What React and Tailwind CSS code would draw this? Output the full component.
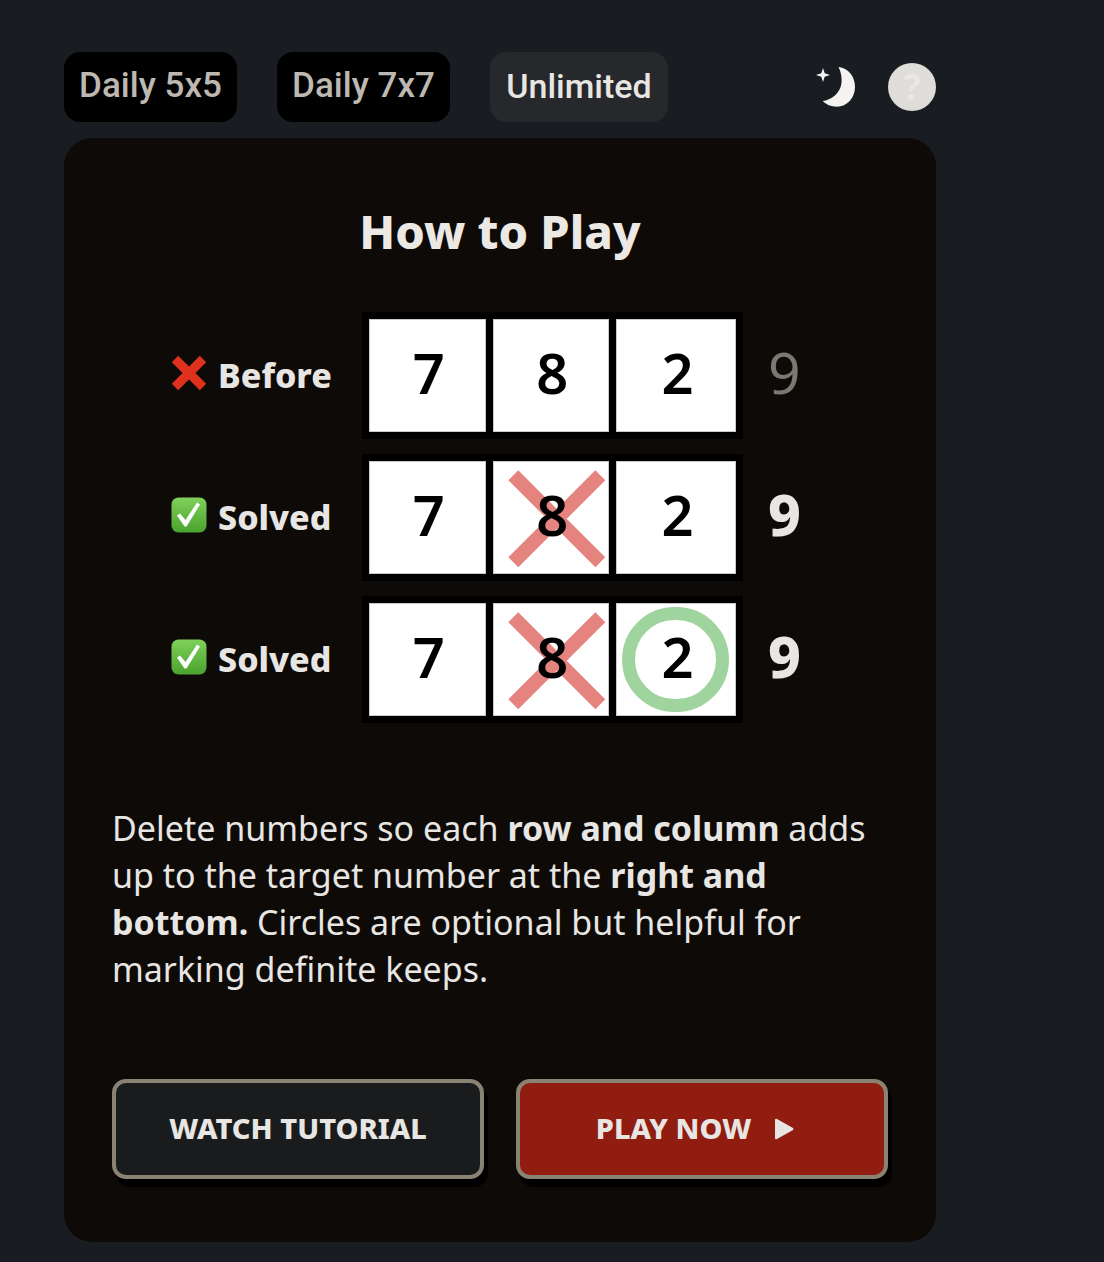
import React from 'react';

const CrossIcon = () => (
  <svg width="36" height="36" viewBox="0 0 36 36" className="shrink-0 -mt-[5px]">
    <path d="M4 4 L32 32 M32 4 L4 32" stroke="#e0301e" strokeWidth="9" />
  </svg>
);

const CheckIcon = () => (
  <svg width="36" height="36" viewBox="0 0 36 36" className="shrink-0 -mt-[5px]">
    <defs>
      <linearGradient id="chk" x1="0" y1="0" x2="0" y2="1">
        <stop offset="0" stopColor="#7fd15a" />
        <stop offset="1" stopColor="#4aa32f" />
      </linearGradient>
    </defs>
    <rect x="0.5" y="0.5" width="35" height="35" rx="7" fill="url(#chk)" />
    <path d="M6 18.5 L9 16.5 L14.5 23 L26 5.5 L29 7.5 L15.5 29.5 L13.5 29.5 Z" fill="#ffffff" />
  </svg>
);

const Cell = ({ value, crossed, circled, wide }) => (
  <div className={`relative flex items-center justify-center h-[113px] bg-white border border-[#c9c9c9] ${wide ? 'w-[120px]' : 'w-[116.5px]'}`}>
    {crossed && (
      <svg className="absolute inset-0 w-full h-full" viewBox="0 0 114.5 111">
        <path d="M19.3 13.3 L106.3 100.3 M106.3 13.3 L19.3 100.3" stroke="#e5837e" strokeWidth="14" />
      </svg>
    )}
    {circled && (
      <div className="absolute left-[5px] top-[3px] w-[107px] h-[105px] rounded-full border-[13px] border-[#9fd49e]" />
    )}
    <span className="relative text-[56px] leading-none font-semibold text-black font-['Noto_Sans',sans-serif] -mt-[8px] ml-[3px]">{value}</span>
  </div>
);

const Row = ({ icon, label, target, dim, crossed, circled }) => (
  <div className="flex items-center">
    <div className="flex items-center w-[191px] gap-[11px]">
      {icon}
      <span className="text-[34px] font-extrabold text-[#e8e6e3]">{label}</span>
    </div>
    <div className="flex gap-[7px] bg-black p-[7px]">
      <Cell value="7" />
      <Cell value="8" crossed={crossed} />
      <Cell value="2" circled={circled} wide />
    </div>
    <span className={`ml-[25px] text-[57px] leading-none -mt-[7px] font-['Noto_Sans',sans-serif] ${dim ? 'font-normal text-[#7d7772]' : 'font-extrabold text-[#e8e6e3]'}`}>
      {target}
    </span>
  </div>
);

const Tab = ({ children, active }) => (
  <button className={`h-[70px] pb-[2px] rounded-[16px] font-medium font-['Roboto',sans-serif] ${active ? 'w-[178px] text-[34px] bg-[#26282b] text-[#e8e6e3]' : 'w-[173px] text-[35px] bg-black text-[#bdb8b1]'}`}>
    {children}
  </button>
);

export default function App() {
  return (
    <div className="min-h-[1262px] bg-[#191d22] pt-[52px] pl-[64px] font-['Noto_Sans',sans-serif]">
      <div className="w-[872px]">
        {/* Top bar */}
        <div className="flex items-center h-[70px] mb-[16px]">
          <div className="flex gap-[40px]">
            <Tab>Daily 5x5</Tab>
            <Tab>Daily 7x7</Tab>
            <Tab active>Unlimited</Tab>
          </div>
          <svg width="44" height="44" viewBox="0 0 44 44" className="ml-auto mr-[28px]">
            <path d="M22.5 2 C33 3 39 12 39 22 C39 33 31 41.7 21 41.7 C15 41.7 10 39.5 6.7 36 C15 35 24 29 25.5 18 C26 12 25 7 22.5 2 Z" fill="#f5f3f2" />
            <path d="M7 3 L8.7 8.3 L14 10 L8.7 11.7 L7 17 L5.3 11.7 L0 10 L5.3 8.3 Z" fill="#f5f3f2" />
          </svg>
          <div className="w-[48px] h-[48px] rounded-full bg-[#dfddd9] flex items-center justify-center text-[36px] font-bold text-[#e9e7e4]">?</div>
        </div>

        {/* Card */}
        <div className="bg-[#0e0a07] rounded-[28px] h-[1104px] px-[48px] pt-[61px]">
          <h1 className="text-center text-[47px] leading-[64px] font-extrabold text-[#ece9e5]">How to Play</h1>

          <div className="flex flex-col gap-[15px] mt-[49px] pl-[59px]">
            <Row icon={<CrossIcon />} label="Before" target="9" dim />
            <Row icon={<CheckIcon />} label="Solved" target="9" crossed />
            <Row icon={<CheckIcon />} label="Solved" target="9" crossed circled />
          </div>

          <p className="mt-[82px] text-[34px] leading-[47px] text-[#e8e6e3] whitespace-nowrap">
            Delete numbers so each <b className="font-bold">row and column</b> adds<br />
            up to the target number at the <b className="font-bold">right and</b><br />
            <b className="font-bold">bottom.</b> Circles are optional but helpful for<br />
            marking definite keeps.
          </p>

          <div className="flex gap-[32px] mt-[86px]">
            <button className="w-[372px] h-[100px] pb-[2px] rounded-[14px] border-[4px] border-[#8a8272] bg-[#1a1b1d] text-[29px] font-extrabold text-[#e8e6e3] shadow-[4px_8px_0_#000]">
              WATCH TUTORIAL
            </button>
            <button className="flex items-center justify-center gap-[23px] w-[372px] h-[100px] pb-[2px] pr-[14px] rounded-[14px] border-[4px] border-[#8a8272] bg-[#911c10] text-[29px] font-extrabold text-[#e8e6e3] shadow-[4px_8px_0_#000]">
              PLAY NOW
              <svg width="20" height="22" viewBox="0 0 20 22" className="mt-[2px]"><path d="M1 2 Q1 0 3 1 L19 10 Q20 11 19 12 L3 21 Q1 22 1 20 Z" fill="#e8e6e3" /></svg>
            </button>
          </div>
        </div>
      </div>
    </div>
  );
}
